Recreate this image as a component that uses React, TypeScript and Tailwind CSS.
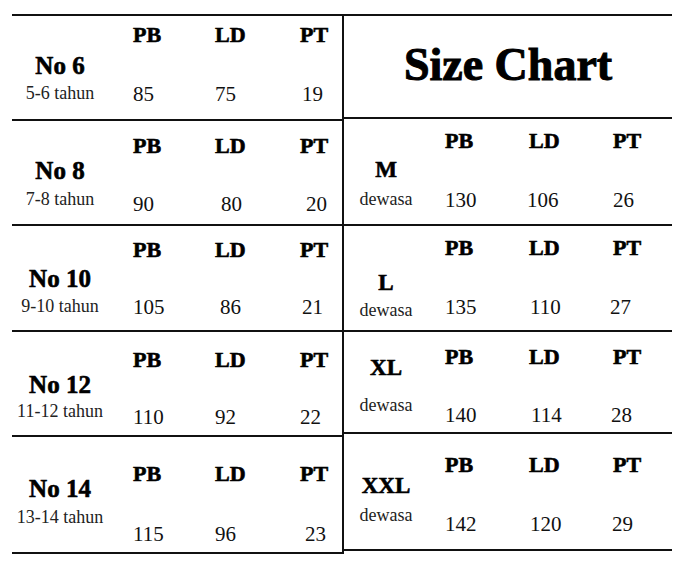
import React from "react";

type Row = {
  name: string;
  age: string;
  h: string;
  nameTop: string;
  ageGap: string;
  numGap: string;
  values: { v: string; cls?: string }[];
};

const kids: Row[] = [
  { name: "No 6", age: "5-6 tahun", h: "h-[105px]", nameTop: "pt-[37px]", ageGap: "mt-[6px]", numGap: "mt-[38px]", values: [{ v: "85" }, { v: "75" }, { v: "19", cls: "ml-[2px]" }] },
  { name: "No 8", age: "7-8 tahun", h: "h-[105px]", nameTop: "pt-[37px]", ageGap: "mt-[7px]", numGap: "mt-[37px]", values: [{ v: "90" }, { v: "80", cls: "ml-[6px]" }, { v: "20", cls: "ml-[6px]" }] },
  { name: "No 10", age: "9-10 tahun", h: "h-[106px]", nameTop: "pt-[40px]", ageGap: "mt-[6px]", numGap: "mt-[36px]", values: [{ v: "105" }, { v: "86", cls: "ml-[5px]" }, { v: "21", cls: "ml-[2px]" }] },
  { name: "No 12", age: "11-12 tahun", h: "h-[105px]", nameTop: "pt-[40px]", ageGap: "mt-[5px]", numGap: "mt-[36px]", values: [{ v: "110" }, { v: "92" }, { v: "22" }] },
  { name: "No 14", age: "13-14 tahun", h: "h-[117px]", nameTop: "pt-[39px]", ageGap: "mt-[7px]", numGap: "mt-[39px]", values: [{ v: "115" }, { v: "96" }, { v: "23", cls: "ml-[5px]" }] },
];

const headTops = ["pt-[8px]", "pt-[14px]", "pt-[13px]", "pt-[17px]", "pt-[26px]"];

const adults: Row[] = [
  { name: "M", age: "dewasa", h: "h-[107px]", nameTop: "pt-[39px]", ageGap: "mt-[9px]", numGap: "mt-[38px]", values: [{ v: "130" }, { v: "106", cls: "-ml-[2px]" }, { v: "26" }] },
  { name: "L", age: "dewasa", h: "h-[106px]", nameTop: "pt-[45px]", ageGap: "mt-[7px]", numGap: "mt-[38px]", values: [{ v: "135" }, { v: "110", cls: "ml-[1px]" }, { v: "27", cls: "-ml-[3px]" }] },
  { name: "XL", age: "dewasa", h: "h-[102px]", nameTop: "pt-[24px]", ageGap: "mt-[17px]", numGap: "mt-[37px]", values: [{ v: "140" }, { v: "114", cls: "ml-[2px]" }, { v: "28", cls: "-ml-[2px]" }] },
  { name: "XXL", age: "dewasa", h: "h-[117px]", nameTop: "pt-[40px]", ageGap: "mt-[9px]", numGap: "mt-[38px]", values: [{ v: "142" }, { v: "120", cls: "ml-[1px]" }, { v: "29", cls: "-ml-[1px]" }] },
];

const adultHeadTops = ["pt-[11px]", "pt-[11px]", "pt-[14px]", "pt-[20px]"];

// heavier look for the bold slab headings
const heavy = "font-bold [-webkit-text-stroke:0.6px_#000]";

const Heads = () => (
  <>
    <span>PB</span>
    <span>LD</span>
    <span>PT</span>
  </>
);

const KidRow = ({ r, top }: { r: Row; top: string }) => (
  <div className={`flex border-b-2 border-[#111] ${r.h}`}>
    <div className={`w-[96px] flex flex-col items-center ${r.nameTop}`}>
      <div className={`text-[25px] leading-none ${heavy}`}>{r.name}</div>
      <div className={`text-[18px] leading-none text-[#222] ${r.ageGap}`}>{r.age}</div>
    </div>
    <div className={`ml-[25px] ${top}`}>
      <div className={`grid grid-cols-[82px_85px_40px] text-[22px] leading-none ${heavy}`}>
        <Heads />
      </div>
      <div className={`grid grid-cols-[82px_85px_40px] text-[21px] leading-none text-[#111] ${r.numGap}`}>
        {r.values.map((x, i) => (
          <span key={i} className={x.cls}>{x.v}</span>
        ))}
      </div>
    </div>
  </div>
);

const AdultRow = ({ r, top }: { r: Row; top: string }) => (
  <div className={`flex border-b-2 border-[#111] ${r.h}`}>
    <div className={`w-[84px] flex flex-col items-center ${r.nameTop}`}>
      <div className={`text-[23px] leading-none ${heavy}`}>{r.name}</div>
      <div className={`text-[18px] leading-none text-[#222] ${r.ageGap}`}>{r.age}</div>
    </div>
    <div className={`ml-[17px] ${top}`}>
      <div className={`grid grid-cols-[84px_84px_40px] text-[22px] leading-none ${heavy}`}>
        <Heads />
      </div>
      <div className={`grid grid-cols-[84px_84px_40px] text-[21px] leading-none text-[#111] ${r.numGap}`}>
        {r.values.map((x, i) => (
          <span key={i} className={x.cls}>{x.v}</span>
        ))}
      </div>
    </div>
  </div>
);

export default function App() {
  return (
    <div className="w-[678px] h-[567px] bg-white text-black font-['Liberation_Serif',serif] pt-[14px] pl-[12px]">
      <div className="flex w-[660px] border-t-2 border-[#111]">
        <div className="w-[332px] border-r-2 border-[#111]">
          {kids.map((r, i) => (
            <KidRow key={r.name} r={r} top={headTops[i]} />
          ))}
        </div>
        <div className="w-[328px]">
          <div className="h-[103px] border-b-2 border-[#111] flex items-center justify-center pb-[4px]">
            <span className="text-[46px] leading-none font-bold [-webkit-text-stroke:1px_#000]">Size Chart</span>
          </div>
          {adults.map((r, i) => (
            <AdultRow key={r.name} r={r} top={adultHeadTops[i]} />
          ))}
        </div>
      </div>
    </div>
  );
}
